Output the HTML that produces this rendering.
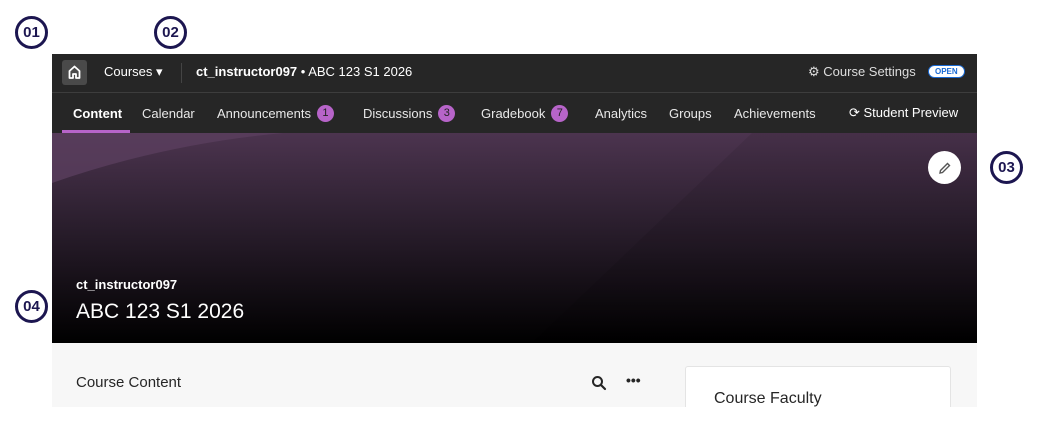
<!DOCTYPE html>
<html><head><style>
body{margin:0;width:1043px;height:436px;background:#fff;position:relative;overflow:hidden;font-family:"Liberation Sans",sans-serif}
.c{position:absolute;width:33px;height:33px;border:3px solid #1c1650;border-radius:50%;box-sizing:border-box;font-weight:bold;font-size:15px;color:#1c1650;display:flex;align-items:center;justify-content:center}
.app{position:absolute;left:52px;top:54px;width:925px;height:353px;background:#f7f7f7;overflow:hidden}
.top{position:absolute;left:0;top:0;width:925px;height:38px;background:#262626;border-bottom:1px solid #3d3d3d;color:#fff;font-size:13px}
.nav{position:absolute;left:0;top:39px;width:925px;height:40px;background:#262626;color:#e8e8e8;font-size:13px}
.nav .t{position:absolute;top:12px;display:flex;align-items:center;height:16px}
.b{display:inline-block;width:17px;height:17px;border-radius:50%;background:#b764c9;color:#222;font-size:11px;text-align:center;line-height:17px;margin-left:6px}
.ban{position:absolute;left:0;top:79px;width:925px;height:210px;background:linear-gradient(#4c344f 0%,#2d2030 40%,#000 100%)}
</style></head><body>
<div class="c" style="left:15px;top:16px">01</div>
<div class="c" style="left:154px;top:16px">02</div>
<div class="c" style="left:990px;top:151px">03</div>
<div class="c" style="left:15px;top:290px">04</div>
<div class="app">
 <div class="top">
  <div style="position:absolute;left:10px;top:6px;width:25px;height:25px;background:#4a4a4a;border-radius:3px">
   <svg width="25" height="25" viewBox="0 0 25 25"><path d="M7.5 18V11L12.5 6.5 17.5 11V18H14V14H11V18Z" fill="none" stroke="#fff" stroke-width="1.8" stroke-linejoin="round"/></svg></div>
  <span style="position:absolute;left:52px;top:10px">Courses ▾</span>
  <div style="position:absolute;left:129px;top:9px;width:1px;height:20px;background:#444"></div>
  <span style="position:absolute;left:144px;top:10px"><b>ct_instructor097</b> • ABC 123 S1 2026</span>
  <span style="position:absolute;left:756px;top:10px;color:#ddd">⚙ Course Settings</span>
  <span style="position:absolute;left:876px;top:11px;background:#fff;color:#1a6ad4;border:1px solid #1a6ad4;border-radius:8px;font-size:8px;font-weight:bold;padding:1px 6px">OPEN</span>
 </div>
 <div class="nav">
  <span class="t" style="left:21px;color:#fff;font-weight:bold">Content</span>
  <div style="position:absolute;left:10px;top:37px;width:68px;height:3px;background:#b764c9"></div>
  <span class="t" style="left:90px">Calendar</span>
  <span class="t" style="left:165px">Announcements<span class="b">1</span></span>
  <span class="t" style="left:311px">Discussions<span class="b">3</span></span>
  <span class="t" style="left:429px">Gradebook<span class="b">7</span></span>
  <span class="t" style="left:543px">Analytics</span>
  <span class="t" style="left:617px">Groups</span>
  <span class="t" style="left:682px">Achievements</span>
  <span class="t" style="left:797px;color:#fff">⟳ Student Preview</span>
 </div>
 <div class="ban">
  <svg width="925" height="210" style="position:absolute;left:0;top:0"><path d="M0 50 Q200 -20 430 0 L0 0Z" fill="#5a3e5e" opacity=".8"/><path d="M700 0 L480 210 L925 210 L925 0Z" fill="#000" opacity=".08"/></svg>
  <div style="position:absolute;left:876px;top:18px;width:33px;height:33px;border-radius:50%;background:#fff;display:flex;align-items:center;justify-content:center">
   <svg width="14" height="14" viewBox="0 0 14 14"><path d="M2 12L2.5 9.5 9.5 2.5 11.5 4.5 4.5 11.5Z" fill="none" stroke="#555" stroke-width="1.4"/></svg></div>
  <div style="position:absolute;left:24px;top:144px;color:#fff;font-size:13px;font-weight:bold">ct_instructor097</div>
  <div style="position:absolute;left:24px;top:167px;color:#fff;font-size:21px">ABC 123 S1 2026</div>
 </div>
 <div style="position:absolute;left:24px;top:320px;font-size:15px;color:#262626">Course Content</div>
 <svg style="position:absolute;left:539px;top:321px" width="16" height="16" viewBox="0 0 16 16"><circle cx="6.5" cy="6.5" r="4.5" fill="none" stroke="#262626" stroke-width="2"/><path d="M10 10L14 14" stroke="#262626" stroke-width="2.2" stroke-linecap="round"/></svg>
 <div style="position:absolute;left:574px;top:318px;font-size:14px;font-weight:bold;color:#262626">•••</div>
 <div style="position:absolute;left:633px;top:312px;width:264px;height:60px;background:#fff;border:1px solid #e4e4e4;border-radius:3px"></div>
 <div style="position:absolute;left:662px;top:336px;font-size:16px;color:#262626">Course Faculty</div>
</div>
</body></html>
